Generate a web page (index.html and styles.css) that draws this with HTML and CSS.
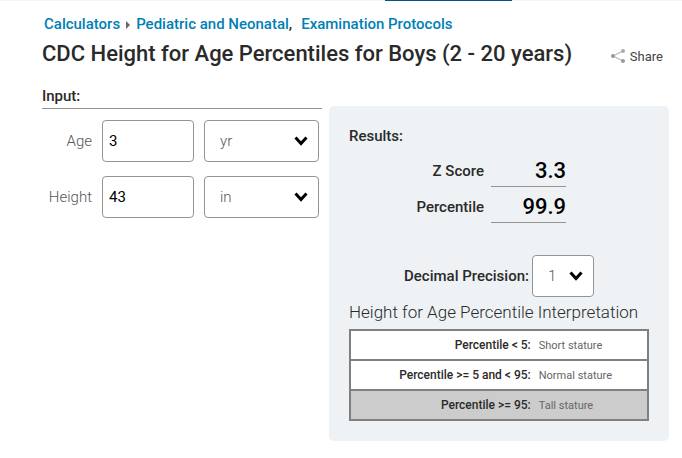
FILE: index.html
```
<!DOCTYPE html>
<html lang="en">
<head>
    <meta charset="utf-8">
    <title>CDC Height for Age Percentiles for Boys</title>
    <link rel="stylesheet" href="styles.css">
</head>
<body>
    <div class="tabs"><div class="active-tab"></div></div>
    <div class="page">
        <nav class="crumbs">
            <a href="#">Calculators</a><svg class="crumb-arrow" width="4" height="8" viewBox="0 0 4 8"><path d="M0 0L4 4L0 8Z" fill="#666"/></svg><a href="#">Pediatric and Neonatal</a>,<a href="#" class="next">Examination Protocols</a>
        </nav>
        <header>
            <h1>CDC Height for Age Percentiles for Boys (2 - 20 years)</h1>
            <button type="button" class="share">
                <svg width="14" height="14" viewBox="0 0 14 14"><path d="M12 2L2 7L12 12" fill="none" stroke="#aaa"/><circle cx="12" cy="2" r="2" fill="#aaa"/><circle cx="2" cy="7" r="2" fill="#999"/><circle cx="12" cy="12" r="2" fill="#999"/></svg>
                Share
            </button>
        </header>
        <div class="columns">
            <form>
                <h2>Input:</h2>
                <div class="row">
                    <label for="age">Age</label>
                    <input type="text" id="age" value="3">
                    <div class="select">
                        <select id="ageUnit" aria-label="Age unit"><option>yr</option><option>mo</option></select>
                        <svg width="14" height="10" viewBox="0 0 14 10"><path d="M1.5 1.5L7 7.5L12.5 1.5" fill="none" stroke="#000" stroke-width="3"/></svg>
                    </div>
                </div>
                <div class="row">
                    <label for="height">Height</label>
                    <input type="text" id="height" value="43">
                    <div class="select">
                        <select id="heightUnit" aria-label="Height unit"><option>in</option><option>cm</option></select>
                        <svg width="14" height="10" viewBox="0 0 14 10"><path d="M1.5 1.5L7 7.5L12.5 1.5" fill="none" stroke="#000" stroke-width="3"/></svg>
                    </div>
                </div>
            </form>
            <section class="results">
                <h2>Results:</h2>
                <div class="score">
                    <label for="z">Z Score</label>
                    <output id="z">3.3</output>
                </div>
                <div class="score">
                    <label for="p">Percentile</label>
                    <output id="p">99.9</output>
                </div>
                <div class="precision">
                    <label for="dp">Decimal Precision:</label>
                    <div class="select">
                        <select id="dp"><option>1</option><option>2</option><option>3</option></select>
                        <svg width="14" height="10" viewBox="0 0 14 10"><path d="M1.5 1.5L7 7.5L12.5 1.5" fill="none" stroke="#000" stroke-width="3"/></svg>
                    </div>
                </div>
                <p>Height for Age Percentile Interpretation</p>
                <table>
                    <tr>
                        <th>Percentile &lt; 5:</th>
                        <td>Short stature</td>
                    </tr>
                    <tr>
                        <th>Percentile &gt;= 5 and &lt; 95:</th>
                        <td>Normal stature</td>
                    </tr>
                    <tr class="match">
                        <th>Percentile &gt;= 95:</th>
                        <td>Tall stature</td>
                    </tr>
                </table>
            </section>
        </div>
    </div>
</body>
</html>
```
FILE: styles.css
```
* {
    box-sizing: border-box;
}
body {
    margin: 0;
    background: #fff;
    color: #2a2a2a;
    font-family: Roboto, "Liberation Sans", sans-serif;
    font-size: 15px;
}
h1, h2, p {
    margin: 0;
    font-weight: 500;
}
a {
    color: #0080b4;
    text-decoration: none;
}
.tabs {
    display: flex;
    justify-content: flex-end;
    height: 1px;
    padding-right: 25%;
    background: #f5f5f5;
}
.active-tab {
    width: 127px;
    background: #005a7e;
}
.page {
    padding: 13px 13px 16px 42px;
}
.crumbs {
    padding-left: 2px;
    font-weight: 500;
    line-height: 20px;
}
.crumb-arrow {
    margin: 0 6px;
}
.next {
    margin-left: 9px;
}
header {
    display: flex;
    justify-content: space-between;
    align-items: center;
    padding-right: 6px;
}
h1 {
    font-size: 22px;
    line-height: 40px;
}
.share {
    display: flex;
    align-items: center;
    gap: 5px;
    padding: 4px 0 0;
    border: 0;
    background: none;
    color: #444;
    font: 13px Roboto, sans-serif;
}
.columns {
    display: grid;
    grid-template-columns: 280fr 340fr;
    gap: 7px;
    align-items: start;
    padding-top: 12px;
}
h2 {
    font-size: 15px;
    line-height: 20px;
}
form h2 {
    padding-bottom: 2px;
    border-bottom: 1px solid #949494;
}
.row {
    display: grid;
    grid-template-columns: 50px 92px 1fr;
    gap: 10px;
    align-items: center;
    margin: 11px 3px 14px 0;
}
.row label {
    color: #555;
    font-size: 15px;
    font-weight: 300;
    text-align: right;
}
input, select {
    width: 100%;
    height: 42px;
    border: 1px solid #949494;
    border-radius: 4px;
    background: #fff;
    font-family: Roboto, sans-serif;
    font-size: 15px;
}
input {
    padding: 0 6px;
    color: #000;
}
select {
    appearance: none;
    padding: 0 15px;
    color: #555;
    font-weight: 300;
}
.select {
    position: relative;
}
.select svg {
    position: absolute;
    top: 16px;
    right: 11px;
    pointer-events: none;
}
.results {
    margin-top: 20px;
    padding: 20px;
    border-radius: 5px;
    background: #eef2f5;
}
.results h2 {
    margin-bottom: 7px;
}
.score {
    display: flex;
    align-items: center;
    gap: 7px;
    height: 36px;
}
.score label {
    width: 45%;
    font-weight: 500;
    text-align: right;
}
output {
    width: 75px;
    height: 32px;
    border-bottom: 1px solid #949494;
    color: #000;
    font-size: 22px;
    font-weight: 500;
    line-height: 32px;
    text-align: right;
}
.precision {
    display: flex;
    justify-content: center;
    align-items: center;
    gap: 3px;
    margin-top: 30px;
}
.precision label {
    font-weight: 500;
}
.precision .select {
    width: 62px;
}
p {
    padding: 5px 0 7px;
    font-size: 17px;
    font-weight: 300;
    line-height: 20px;
}
table {
    width: 100%;
    border-collapse: collapse;
    background: #fff;
    font-size: 11px;
}
tr {
    height: 30px;
    border: 2px solid #808080;
}
th, td {
    padding: 0 4px;
}
th {
    width: 62%;
    font-size: 12px;
    font-weight: 500;
    text-align: right;
}
td {
    color: #666;
    text-align: left;
}
.match {
    background: #ccc;
}
```
